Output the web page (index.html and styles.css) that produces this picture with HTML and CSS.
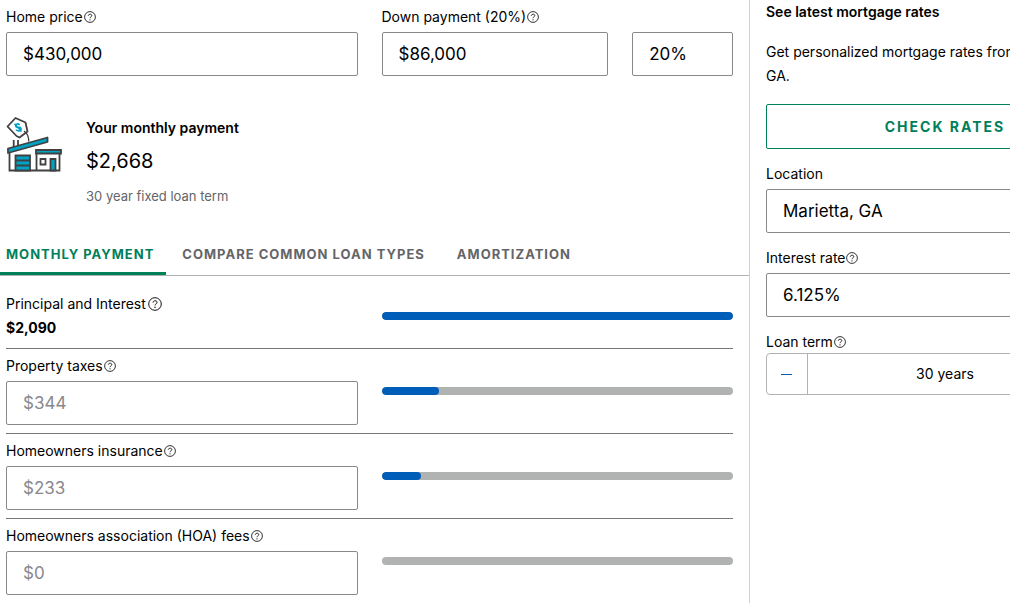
FILE: index.html
```html
<!DOCTYPE html>
<html lang="en">
<head>
<meta charset="utf-8">
<title>Mortgage calculator</title>
<link rel="stylesheet" href="styles.css">
</head>
<body>
<svg class="sprite" aria-hidden="true">
  <symbol id="help" viewBox="0 0 12 12">
    <circle cx="6" cy="6" r="5.4" fill="none" stroke="currentColor" stroke-width=".8"/>
    <path d="M4.3 4.8C4.3 2.7 7.8 2.7 7.8 4.6C7.8 5.8 6 5.8 6 7.2" fill="none" stroke="currentColor" stroke-width=".8"/>
    <circle cx="6" cy="8.8" r=".6" fill="currentColor"/>
  </symbol>
</svg>
<div class="page">
  <main class="main">
    <div class="columns">
      <div class="field">
        <div class="label-row"><label for="price">Home price</label><button class="help" aria-label="About home price"><svg><use href="#help"/></svg></button></div>
        <input class="input" id="price" value="$430,000">
      </div>
      <div class="field">
        <div class="label-row"><label for="down">Down payment (20%)</label><button class="help" aria-label="About down payment"><svg><use href="#help"/></svg></button></div>
        <div class="down">
          <input class="input" id="down" value="$86,000">
          <input class="input" aria-label="Down payment percent" value="20%">
        </div>
      </div>
    </div>

    <section class="summary">
      <svg class="house" viewBox="0 0 56 56" fill="none" stroke="#414042" stroke-width="1.8">
        <path d="M7.700 32V24M12 30V24"/>
        <path d="M3.500 36V54.500H53.500V37M30.500 37V54"/>
        <path d="M2 32.500L41.500 21.500V26L2 37Z" fill="#00a3c4" stroke-linejoin="round"/>
        <path d="M30 34H55V37.500H30Z" fill="#00a3c4"/>
        <path d="M9.500 39.500H24V54.500H9.500Z" fill="#00a3c4"/>
        <path d="M9.500 44.500H24M9.500 49.500H24"/>
        <path d="M34.500 43H39.500V48.500H34.500Z"/>
        <path d="M44.500 43H49.500V54.500H44.500Z" fill="#00a3c4"/>
        <path d="M1.500 10.500L9.500 2L19.500 6.500L21.500 15.500L13.500 21.500L10.500 20Z" fill="#fff" stroke-linejoin="round"/>
        <path d="M18 15C21.500 18 22.500 20 22.800 25.500" stroke-width="1.300"/>
        <path d="M13.700 9C11.500 6.500 8.300 9 10.300 11C11.800 12.300 14 10.300 15 12.300C15.800 14.500 12.300 16 10 13.700M8.500 7.700L15.500 15.500" stroke="#00a3c4" stroke-width="1.600"/>
      </svg>
      <div>
        <h2 class="summary-title">Your monthly payment</h2>
        <p class="amount">$2,668</p>
        <p class="caption">30 year fixed loan term</p>
      </div>
    </section>

    <div class="tabs" role="tablist">
      <button class="tab active" role="tab" aria-selected="true">Monthly payment</button>
      <button class="tab" role="tab">Compare common loan types</button>
      <button class="tab" role="tab">Amortization</button>
    </div>

    <div class="breakdown">
      <div class="columns row">
        <div class="principal">
          <div class="principal-label">Principal and Interest<button class="help large" aria-label="About principal and interest"><svg><use href="#help"/></svg></button></div>
          <strong>$2,090</strong>
        </div>
        <div class="bar"><div class="fill" style="width:100%"></div></div>
      </div>
      <div class="columns row">
        <div class="field">
          <div class="label-row"><label for="tax">Property taxes</label><button class="help" aria-label="About property taxes"><svg><use href="#help"/></svg></button></div>
          <input class="input" id="tax" placeholder="$344">
        </div>
        <div class="bar"><div class="fill" style="width:16.5%"></div></div>
      </div>
      <div class="columns row">
        <div class="field">
          <div class="label-row"><label for="ins">Homeowners insurance</label><button class="help" aria-label="About homeowners insurance"><svg><use href="#help"/></svg></button></div>
          <input class="input" id="ins" placeholder="$233">
        </div>
        <div class="bar"><div class="fill" style="width:11.1%"></div></div>
      </div>
      <div class="columns row">
        <div class="field">
          <div class="label-row"><label for="hoa">Homeowners association (HOA) fees</label><button class="help" aria-label="About HOA fees"><svg><use href="#help"/></svg></button></div>
          <input class="input" id="hoa" placeholder="$0">
        </div>
        <div class="bar"></div>
      </div>
    </div>
  </main>

  <aside class="side">
    <div>
      <h2 class="side-title">See latest mortgage rates</h2>
      <p class="side-text">Get personalized mortgage rates from Marietta,<br>GA.</p>
    </div>
    <button class="check">Check rates</button>
    <div class="field">
      <div class="label-row"><label for="loc">Location</label></div>
      <input class="input" id="loc" value="Marietta, GA">
    </div>
    <div class="field">
      <div class="label-row"><label for="rate">Interest rate</label><button class="help" aria-label="About interest rate"><svg><use href="#help"/></svg></button></div>
      <input class="input" id="rate" value="6.125%">
    </div>
    <div class="field">
      <div class="label-row tight"><label for="term">Loan term</label><button class="help" aria-label="About loan term"><svg><use href="#help"/></svg></button></div>
      <div class="stepper">
        <button class="step" aria-label="Decrease"><svg viewBox="0 0 12 12"><path d="M0 6.500H11" stroke="#0a5cab"/></svg></button>
        <input class="term" id="term" value="30 years">
        <button class="step" aria-label="Increase"><svg viewBox="0 0 12 12"><path d="M0 6.500H11M5.500 1V12" stroke="#0a5cab"/></svg></button>
      </div>
    </div>
  </aside>
</div>
</body>
</html>
```
FILE: styles.css
```css
* { box-sizing: border-box; }
html { overflow: hidden; }
body {
  margin: 0;
  background: #fff;
  color: #000;
  font: 14px/24px Inter, "Liberation Sans", sans-serif;
}
h2, p { margin: 0; }
button, input { font: inherit; color: inherit; }
button { background: none; border: 0; padding: 0; cursor: pointer; }
.sprite { display: none; }

.page {
  display: grid;
  grid-template-columns: 750fr 390fr;
  width: 100%;
  min-width: 1140px;
  min-height: 100vh;
}
.main { border-right: 1px solid #d0d0d0; padding-top: 8px; }
.columns {
  display: grid;
  grid-template-columns: 1fr 1fr;
  gap: 24px;
  align-items: center;
  margin: 0 16px 0 6px;
}
.down { display: grid; grid-template-columns: 9fr 4fr; gap: 24px; }

.label-row {
  display: flex;
  align-items: center;
  gap: 1px;
  line-height: 18px;
  padding-bottom: 6px;
}
.label-row.tight { padding-bottom: 2px; }
.help { display: flex; }
.help svg { width: 12px; height: 12px; }
.help.large svg { width: 14px; height: 14px; }
.input {
  display: block;
  width: 100%;
  min-width: 0;
  height: 44px;
  padding: 0 16px;
  border: 1px solid #88898d;
  border-radius: 2px;
  background: #fff;
  font-size: 17px;
}
.input::placeholder { color: #88898d; opacity: 1; }

.summary { display: flex; gap: 24px; padding: 40px 6px 0; }
.house { width: 56px; height: 56px; }
.summary-title { font-size: 14px; font-weight: 600; line-height: 24px; }
.amount { font-size: 20px; line-height: 32px; margin-top: 5px; }
.caption { font-size: 13px; color: #636569; line-height: 24px; margin-top: 7px; }

.tabs { display: flex; margin-top: 24px; border-bottom: 1px solid #b1b3b3; }
.tab {
  height: 43px;
  padding: 4px 16px 0;
  border-bottom: 3px solid transparent;
  color: #636569;
  font-size: 13px;
  font-weight: 700;
  letter-spacing: 1px;
  text-transform: uppercase;
}
.tab.active { padding-left: 6px; padding-right: 12px; color: #00805a; border-color: #00805a; }

.breakdown { padding-top: 8px; }
.row { padding: 8px 0; border-bottom: 1px solid #75787b; }
.row:last-child { border-bottom: 0; }
.principal strong { display: block; font-weight: 700; }
.principal-label { display: flex; align-items: center; gap: 2px; }
.bar { height: 8px; border-radius: 4px; background: #b1b3b3; overflow: hidden; }
.fill { height: 100%; border-radius: 4px; background: #005eb8; }

.side { display: flex; flex-direction: column; gap: 16px; padding: 0 16px; }
.side-title { font-size: 14px; font-weight: 600; line-height: 24px; }
.side-text { margin-top: 16px; }
.check {
  height: 45px;
  border: 1px solid #00805a;
  border-radius: 2px;
  color: #00805a;
  font-weight: 700;
  letter-spacing: 2px;
  text-transform: uppercase;
}
.stepper { display: flex; height: 42px; border: 1px solid #b1b3b3; border-radius: 4px; }
.step { display: grid; place-items: center; width: 41px; border-right: 1px solid #b1b3b3; }
.step:last-child { border-right: 0; border-left: 1px solid #b1b3b3; }
.step svg { width: 12px; height: 12px; }
.term { flex: 1; min-width: 0; border: 0; background: none; text-align: center; }
```
